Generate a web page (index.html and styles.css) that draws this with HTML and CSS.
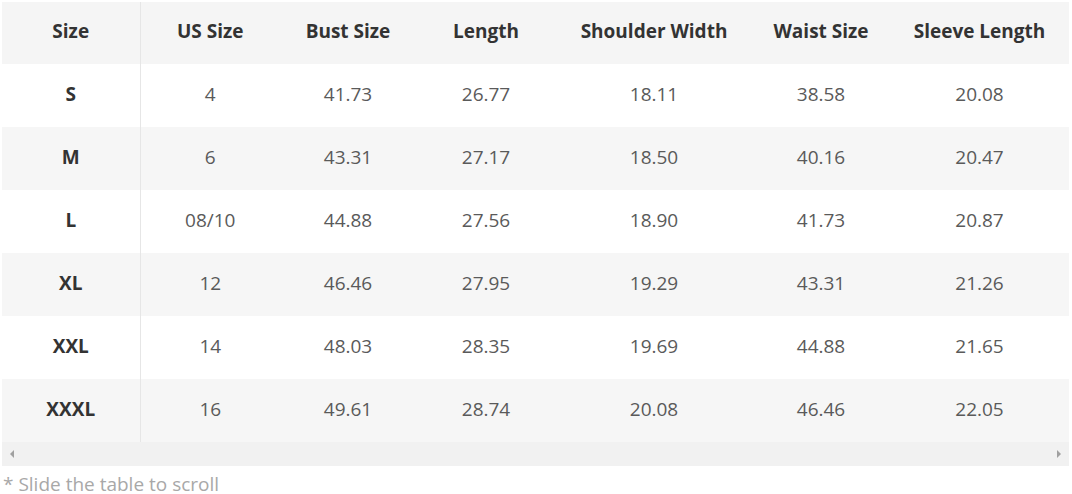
FILE: index.html
```html
<!DOCTYPE html>
<html>
<head>
<meta charset="utf-8">
<link rel="stylesheet" href="styles.css">
</head>
<body>
<div class="wrap">
  <table class="size-table">
    <colgroup>
      <col class="c1"><col class="c2"><col class="c3"><col class="c4"><col class="c5"><col class="c6"><col class="c7">
    </colgroup>
    <thead>
      <tr><th class="first">Size</th><th>US Size</th><th>Bust Size</th><th>Length</th><th>Shoulder Width</th><th>Waist Size</th><th>Sleeve Length</th></tr>
    </thead>
    <tbody>
      <tr><td class="first">S</td><td>4</td><td>41.73</td><td>26.77</td><td>18.11</td><td>38.58</td><td>20.08</td></tr>
      <tr class="alt"><td class="first">M</td><td>6</td><td>43.31</td><td>27.17</td><td>18.50</td><td>40.16</td><td>20.47</td></tr>
      <tr><td class="first">L</td><td>08/10</td><td>44.88</td><td>27.56</td><td>18.90</td><td>41.73</td><td>20.87</td></tr>
      <tr class="alt"><td class="first">XL</td><td>12</td><td>46.46</td><td>27.95</td><td>19.29</td><td>43.31</td><td>21.26</td></tr>
      <tr><td class="first">XXL</td><td>14</td><td>48.03</td><td>28.35</td><td>19.69</td><td>44.88</td><td>21.65</td></tr>
      <tr class="alt"><td class="first">XXXL</td><td>16</td><td>49.61</td><td>28.74</td><td>20.08</td><td>46.46</td><td>22.05</td></tr>
    </tbody>
  </table>
  <div class="scrollbar">
    <span class="arrow left"></span>
    <span class="arrow right"></span>
  </div>
  <p class="note">* Slide the table to scroll</p>
</div>
</body>
</html>
```
FILE: styles.css
```css
html, body {
  margin: 0;
  padding: 0;
  background: #ffffff;
}
.wrap {
  padding: 2px 3px 0 2px;
  font-family: "Open Sans", "Noto Sans", sans-serif;
}
.size-table {
  width: 1067px;
  border-collapse: collapse;
  table-layout: fixed;
}
.c1 { width: 138px; }
.c2 { width: 140px; }
.c3 { width: 136px; }
.c4 { width: 140px; }
.c5 { width: 196px; }
.c6 { width: 138px; }
.c7 { width: 179px; }
.size-table th,
.size-table td {
  text-align: center;
  padding: 0 0 4px 0;
  white-space: nowrap;
  line-height: 24px;
}
.size-table th {
  height: 58px;
  background: #f5f5f5;
  color: #333333;
  font-weight: 700;
  font-size: 19px;
}
.size-table td {
  height: 59px;
  color: #5a5a5a;
  font-size: 19px;
}
.size-table tr.alt td {
  background: #f6f6f6;
}
.size-table .first {
  border-right: 1px solid #e6e6e6;
  font-weight: 700;
  color: #333333;
}
.scrollbar {
  width: 1067px;
  height: 24px;
  background: #f1f1f1;
  display: flex;
  justify-content: space-between;
  align-items: center;
  padding: 0 8px;
  box-sizing: border-box;
}
.arrow {
  width: 0;
  height: 0;
  border-top: 4px solid transparent;
  border-bottom: 4px solid transparent;
}
.arrow.left { border-right: 4px solid #a0a0a0; }
.arrow.right { border-left: 4px solid #a0a0a0; }
.note {
  margin: 9px 0 0 1px;
  color: #a8a8a8;
  font-size: 19px;
  line-height: 18px;
}
```
